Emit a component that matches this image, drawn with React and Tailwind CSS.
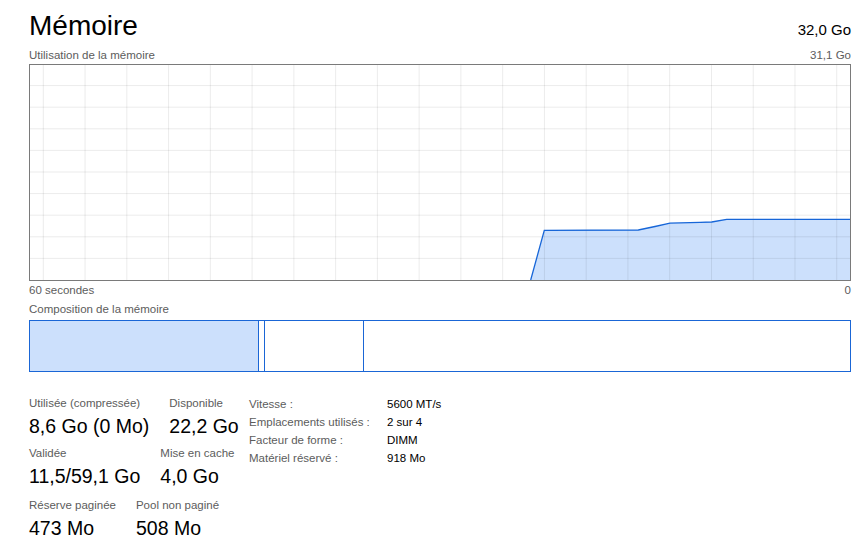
const V_LINES = Array.from({ length: 20 }, (_, k) => 43.3 + 41.76 * k);
const H_LINES = Array.from({ length: 9 }, (_, k) => 85.6 + 21.6 * k);

const USAGE = [
  [530.7, 280],
  [544.3, 230.3],
  [638.3, 230],
  [655, 226.5],
  [670, 223.2],
  [700, 222.4],
  [711.7, 222],
  [726.7, 219.3],
  [850, 219.3],
];

const STAT_ROWS = [
  [
    ["Utilisée (compressée)", "8,6 Go (0 Mo)"],
    ["Disponible", "22,2 Go"],
  ],
  [
    ["Validée", "11,5/59,1 Go"],
    ["Mise en cache", "4,0 Go"],
  ],
  [
    ["Réserve paginée", "473 Mo"],
    ["Pool non paginé", "508 Mo"],
  ],
];

const SPECS = [
  ["Vitesse :", "5600 MT/s"],
  ["Emplacements utilisés :", "2 sur 4"],
  ["Facteur de forme :", "DIMM"],
  ["Matériel réservé :", "918 Mo"],
];

function UsageGraph() {
  const line = USAGE.map(([x, y]) => `${x},${y}`).join(" ");
  const area = `${line} 850,280 530.7,280`;
  return (
    <div className="mt-[1px] h-[217px] w-[822px] border border-[#7a7a7a]">
      <svg width="820" height="215" viewBox="30 65 820 215" className="block">
        <polygon points={area} fill="#cce0fc" />
        {V_LINES.map((x) => (
          <line key={x} x1={x} x2={x} y1="65" y2="280" stroke="rgba(0,0,0,0.08)" strokeWidth="1" />
        ))}
        {H_LINES.map((y) => (
          <line key={y} x1="30" x2="850" y1={y} y2={y} stroke="rgba(0,0,0,0.08)" strokeWidth="1" />
        ))}
        <polyline points={line} fill="none" stroke="#1766d8" strokeWidth="1.3" />
      </svg>
    </div>
  );
}

function Composition() {
  return (
    <div className="mt-[3px] flex h-[52px] w-[822px] border border-[#1a66d6]">
      <div className="w-[229px] border-r border-[#1a66d6] bg-[#cce0fc]" />
      <div className="w-[6px] border-r border-[#1a66d6]" />
      <div className="w-[99px] border-r border-[#1a66d6]" />
      <div className="flex-1" />
    </div>
  );
}

export default function App() {
  return (
    <div className="h-[546px] w-[868px] overflow-hidden bg-white pl-[29px] pt-[10px] font-['Liberation_Sans',Arial,sans-serif] text-black">
      <div className="flex w-[822px] items-baseline justify-between">
        <h1 className="text-[28px] leading-[32px]">Mémoire</h1>
        <span className="text-[15px]">32,0 Go</span>
      </div>

      <div className="mt-[5px] flex w-[822px] justify-between text-[11.5px] leading-[16px] text-[#5c5c5c]">
        <span>Utilisation de la mémoire</span>
        <span>31,1 Go</span>
      </div>

      <UsageGraph />

      <div className="mt-[1px] flex w-[822px] justify-between text-[11.5px] leading-[16px] text-[#5c5c5c]">
        <span>60 secondes</span>
        <span>0</span>
      </div>

      <div className="mt-[3px] text-[11.5px] leading-[16px] text-[#5c5c5c]">Composition de la mémoire</div>

      <Composition />

      <div className="mt-[23px] flex">
        <div className="w-[220px]">
          {STAT_ROWS.map((row, i) => (
            <div key={i} className={`flex gap-[20px] ${i === 1 ? "mt-[7px]" : i === 2 ? "mt-[9px]" : ""}`}>
              {row.map(([label, value]) => (
                <div key={label} className="flex flex-col">
                  <span className="text-[11.5px] leading-[16px] text-[#5c5c5c]">{label}</span>
                  <span className="mt-[3px] whitespace-nowrap text-[19.5px] leading-[24px]">{value}</span>
                </div>
              ))}
            </div>
          ))}
        </div>

        <table className="self-start text-[11.5px] leading-[18px]">
          <tbody>
            {SPECS.map(([label, value]) => (
              <tr key={label}>
                <td className="w-[138px] p-0 text-[#5c5c5c]">{label}</td>
                <td className="p-0">{value}</td>
              </tr>
            ))}
          </tbody>
        </table>
      </div>
    </div>
  );
}
